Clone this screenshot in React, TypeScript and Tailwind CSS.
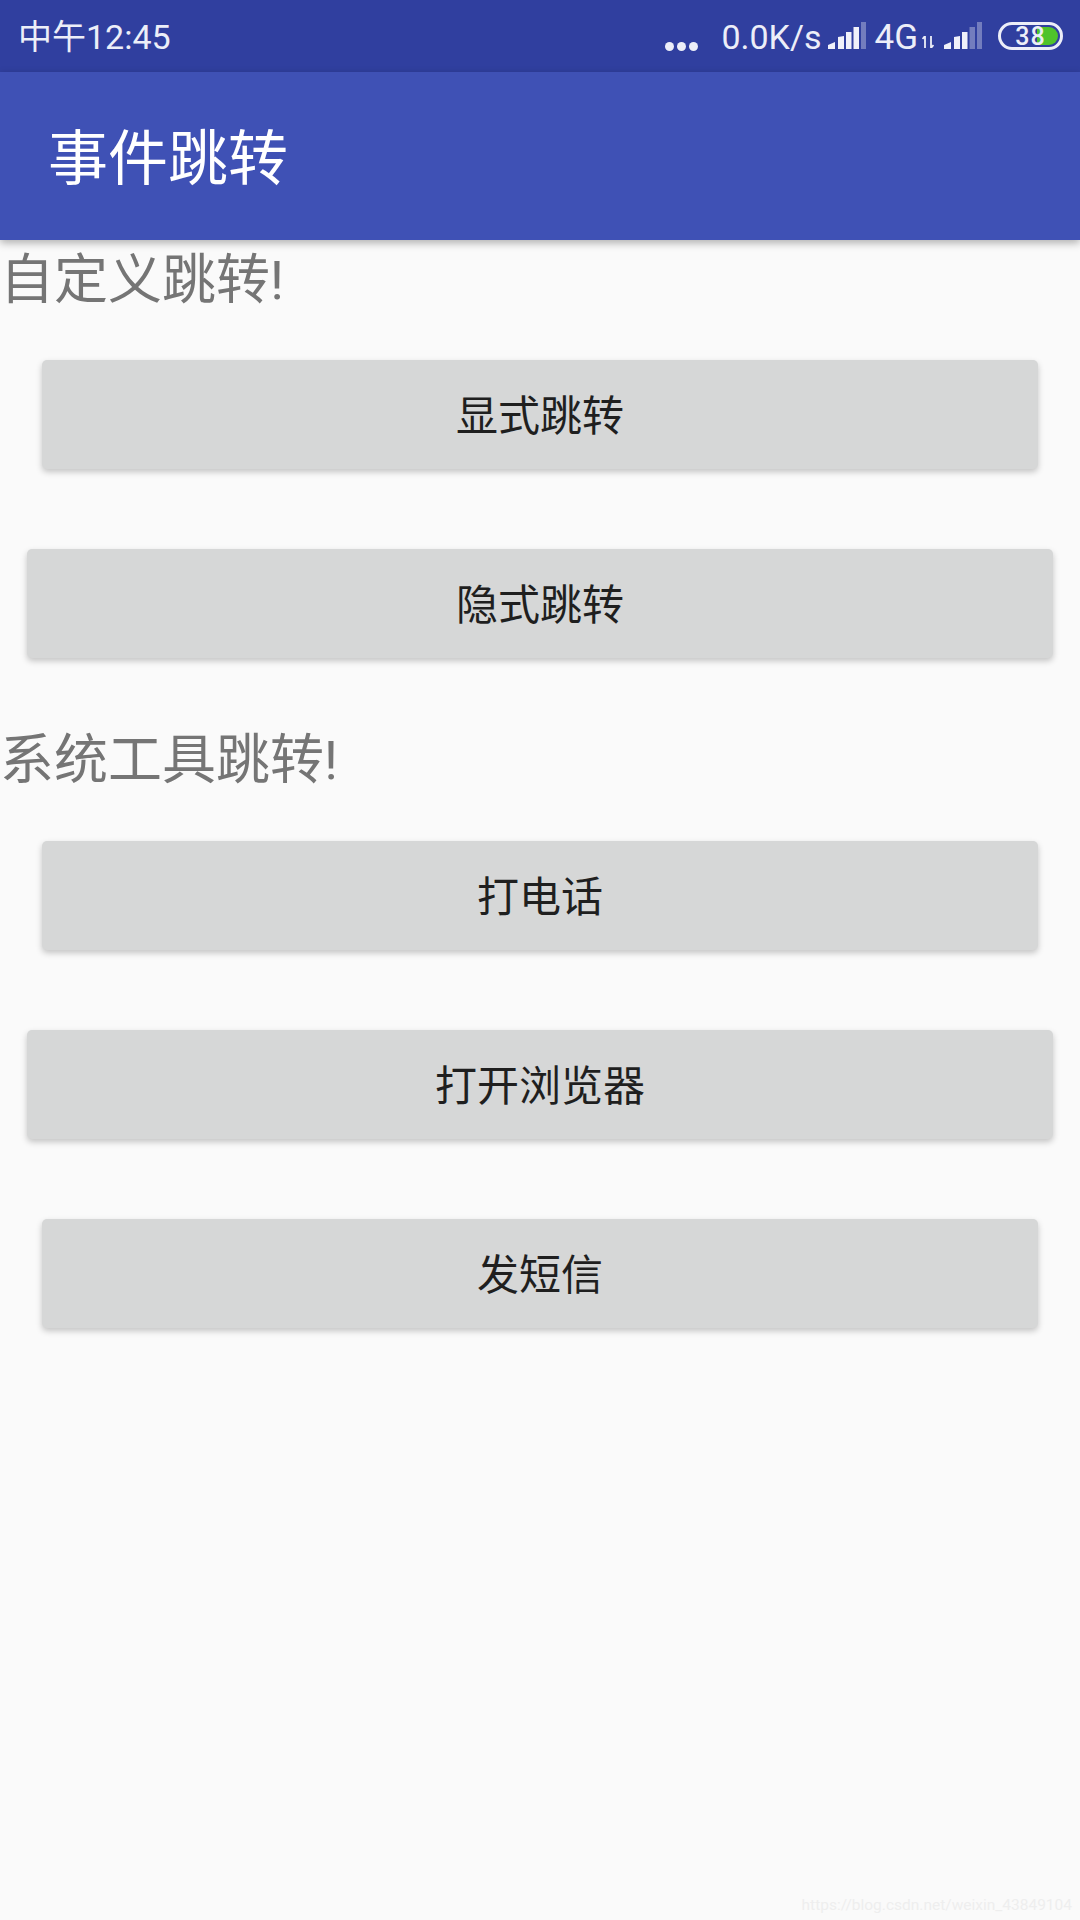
const fontStack = { fontFamily: '"Roboto", "Noto Sans CJK SC", sans-serif' };

function SignalBars({ dimFrom }: { dimFrom: number }) {
  const bars = [
    "M0 27 V23 L7 20 V27 Z",
    "M10 27 V15 L16 14 V27 Z",
    "M18 27 V10 H23.5 V27 Z",
    "M25.5 27 V5 H31 V27 Z",
    "M33 27 V0 H38 V27 Z",
  ];
  return (
    <svg width="39" height="27" viewBox="0 0 39 27">
      {bars.map((d, i) => (
        <path key={d} d={d} fill="#f0f1fa" fillOpacity={i >= dimFrom ? 0.35 : 1} />
      ))}
    </svg>
  );
}

function StatusBar() {
  return (
    <div className="flex h-[72px] items-center justify-between bg-[#303f9f] pl-[18px] pr-[17px] text-[#eceef8]">
      <span className="mt-[2px] text-[34px] leading-none">中午12:45</span>
      <div className="flex items-center">
        <div className="mt-[20px] mr-[23px] flex gap-[3px]">
          <span className="h-[9px] w-[9px] rounded-full bg-[#eceef8]" />
          <span className="h-[9px] w-[9px] rounded-full bg-[#eceef8]" />
          <span className="h-[9px] w-[9px] rounded-full bg-[#eceef8]" />
        </div>
        <span className="mt-[2px] text-[34px] leading-none">0.0K/s</span>
        <div className="mt-[-1px] ml-[7px]">
          <SignalBars dimFrom={4} />
        </div>
        <span className="mt-[2px] ml-[7px] text-[35px] leading-none">4G</span>
        <svg className="mt-[12px] ml-[4px]" width="12" height="12" viewBox="0 0 12 12">
          <path d="M3 0 V12 M0.5 3 L3 0 M9 12 V0 M9 12 L11.5 9" fill="none" stroke="#eceef8" strokeWidth="1.8" />
        </svg>
        <div className="mt-[-1px] ml-[10px]">
          <SignalBars dimFrom={3} />
        </div>
        <div className="relative mt-[-1px] ml-[15px] h-[28px] w-[65px] rounded-full border-[3px] border-[#eceef8]">
          <div className="absolute top-[2px] right-[2px] bottom-[2px] left-[36px] rounded-r-full bg-[#4fc32a]" />
          <span className="absolute inset-0 flex items-center justify-center pt-[1px] text-[25px] leading-none font-medium tracking-[1px] text-[#eceef8]">
            38
          </span>
        </div>
      </div>
    </div>
  );
}

function ActionButton({ label, wide, className }: { label: string; wide?: boolean; className?: string }) {
  return (
    <button
      className={`flex h-[109px] items-center justify-center rounded-[5px] bg-[#d6d7d7] pt-[5px] text-[42px] leading-none text-[#1f1f1f] shadow-[0_3px_6px_rgba(0,0,0,0.22)] ${
        wide ? "mx-[27px]" : "mx-[42px]"
      } ${className ?? ""}`}
    >
      {label}
    </button>
  );
}

export default function App() {
  return (
    <div className="flex h-[1920px] w-[1080px] flex-col overflow-hidden bg-[#fafafa]" style={fontStack}>
      <StatusBar />
      <div className="relative z-10 flex h-[168px] items-center bg-[#3f51b5] pt-[7px] pl-[48px] shadow-[0_3px_8px_rgba(0,0,0,0.3)]">
        <span className="text-[60px] leading-none text-white">事件跳转</span>
      </div>

      <p className="mt-[8px] h-[66px] text-[54px] leading-[66px] text-[#757575]">自定义跳转!</p>
      <ActionButton label="显式跳转" className="mt-[46px]" />
      <ActionButton label="隐式跳转" wide className="mt-[80px]" />

      <p className="mt-[70px] h-[66px] text-[54px] leading-[66px] text-[#757575]">系统工具跳转!</p>
      <ActionButton label="打电话" className="mt-[47px]" />
      <ActionButton label="打开浏览器" wide className="mt-[80px]" />
      <ActionButton label="发短信" className="mt-[80px]" />

      <div className="mt-auto flex justify-end pr-[8px] pb-[7px]">
        <span className="text-[15.5px] leading-none text-[#eeeeee]">https://blog.csdn.net/weixin_43849104</span>
      </div>
    </div>
  );
}
